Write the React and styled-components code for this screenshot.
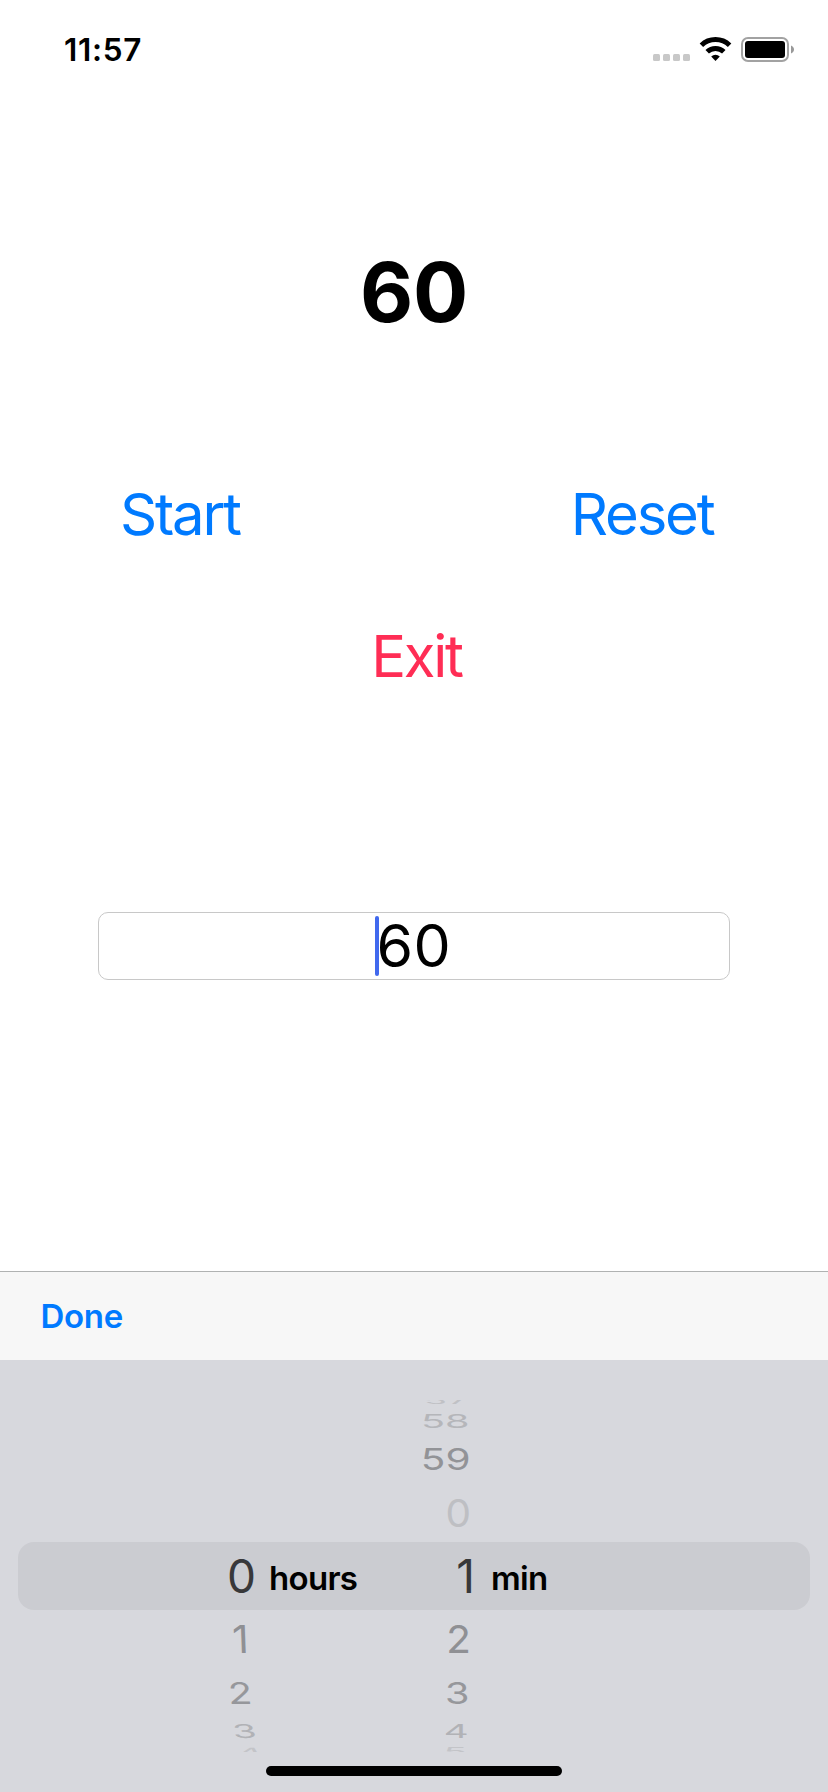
import React from "react";
import styled, { createGlobalStyle } from "styled-components";

const GlobalStyle = createGlobalStyle`
  * { box-sizing: border-box; }
  body { margin: 0; background: #fff; font-family: Inter, "Liberation Sans", sans-serif; }
  button { border: 0; padding: 0; background: none; font-family: inherit; }
`;

const Screen = styled.div`
  width: 828px;
  height: 1792px;
  display: flex;
  flex-direction: column;
  overflow: hidden;
  background: #fff;
`;

const StatusBar = styled.header`
  height: 100px;
  padding: 0 33px 0 64px;
  display: flex;
  justify-content: space-between;
  align-items: center;
`;

const Clock = styled.span`
  font-size: 31.5px;
  line-height: 40px;
  font-weight: 600;
  letter-spacing: 0.7px;
`;

const StatusIcons = styled.svg`
  display: block;
`;

const Countdown = styled.h1`
  margin: 143px 0 0;
  height: 100px;
  line-height: 100px;
  text-align: center;
  font-size: 82px;
  font-weight: 700;
  letter-spacing: -0.3px;
`;

const ButtonRow = styled.div`
  display: flex;
  justify-content: ${(p) => (p.$center ? "center" : "space-between")};
  margin-top: ${(p) => p.$top}px;
  padding: ${(p) => p.$pad};
`;

const TextButton = styled.button`
  height: 80px;
  line-height: 80px;
  font-size: 58px;
  color: ${(p) => p.$color};
  letter-spacing: ${(p) => p.$tracking}px;
`;

const Field = styled.div`
  width: 632px;
  height: 68px;
  margin: 216px 0 0 98px;
  border: 1px solid #c8c8c8;
  border-radius: 10px;
  display: flex;
  align-items: center;
  padding-left: 276px;
  font-size: 59px;
  line-height: 60px;
  letter-spacing: 0.5px;
`;

const Caret = styled.span`
  flex: none;
  width: 4px;
  height: 60px;
  border-radius: 2px;
  background: #4169ee;
`;

const FieldText = styled.span`
  margin-left: -2.5px;
`;

const Toolbar = styled.div`
  margin-top: auto;
  height: 89px;
  border-top: 1px solid #b0b2b2;
  background: #f7f7f7;
  padding-left: 40.5px;
  display: flex;
  align-items: center;
`;

const DoneButton = styled.button`
  font-size: 33px;
  line-height: 40px;
  font-weight: 600;
  color: #007aff;
  letter-spacing: -0.3px;
`;

const Keyboard = styled.div`
  height: 432px;
  padding-top: 40px;
  background: #d7d8dd;
  display: flex;
  flex-direction: column;
  align-items: center;
`;

const Wheel = styled.div`
  width: 792px;
  height: 352px;
  overflow: hidden;
  display: flex;
  flex-direction: column;
  justify-content: center;
`;

const WheelRow = styled.div`
  flex: none;
  height: ${(p) => p.$height}px;
  display: grid;
  grid-template-columns: 238px 118px 100px 150px;
  align-items: center;
  border-radius: 16px;
  background: ${(p) => (p.$selected ? "#cbccd1" : "transparent")};
  color: ${(p) => p.$color};
`;

const Digit = styled.span`
  justify-self: end;
  height: 60px;
  margin: -30px ${(p) => p.$inset}px -30px 0;
  font-size: 46px;
  line-height: 60px;
  transform-origin: 100% 50%;
  transform: scale(${(p) => p.$sx}, ${(p) => p.$sy}) skewX(${(p) => p.$skew || 0}deg);
`;

const Unit = styled.span`
  padding-left: ${(p) => p.$left}px;
  padding-top: 3px;
  font-size: 33px;
  line-height: 40px;
  font-weight: 600;
  color: #000;
  letter-spacing: -0.7px;
`;

const HomeIndicator = styled.div`
  width: 296px;
  height: 10px;
  margin-top: 14px;
  border-radius: 5px;
  background: #000;
`;

const rows = [
  { height: 16, sx: 0.84, sy: 0.23, color: "#c0c1c5", min: "57", minInset: 6, minSkew: 8 },
  { height: 26, sx: 0.86, sy: 0.41, color: "#b5b6ba", min: "58", minInset: 5 },
  { height: 50, sx: 0.88, sy: 0.65, color: "#929397", min: "59", minInset: 4 },
  { height: 58, sx: 0.88, sy: 0.83, color: "#bebfc3", min: "0", minInset: 3 },
  { height: 68, sx: 1, sy: 1, color: "#38383a", hour: "0", min: "1", hourInset: 0, minInset: -1, selected: true },
  { height: 58, sx: 0.88, sy: 0.84, color: "#8f9094", hour: "1", min: "2", hourInset: 7, minInset: 3, hourSkew: 2 },
  { height: 50, sx: 0.86, sy: 0.65, color: "#96979b", hour: "2", min: "3", hourInset: 4, minInset: 5, hourSkew: 3 },
  { height: 26, sx: 0.84, sy: 0.41, color: "#b1b2b6", hour: "3", min: "4", hourInset: 0, minInset: 5, hourSkew: 5 },
  { height: 16, sx: 0.84, sy: 0.25, color: "#c3c4c8", hour: "4", min: "5", hourInset: -7, minInset: 7, hourSkew: 10 },
];

export default function App() {
  return (
    <>
      <GlobalStyle />
      <Screen>
        <StatusBar>
          <Clock>11:57</Clock>
          <StatusIcons width="144" height="30" viewBox="651 35 144 30">
            {[653, 663, 673, 683].map((x) => (
              <rect key={x} x={x} y="54" width="7" height="7" rx="1.5" fill="#c8c8c8" />
            ))}
            <g fill="none" stroke="#000" strokeWidth="5">
              <path d="M701.4 45.2a20.3 20.3 0 0 1 28.2 0" />
              <path d="M707.2 51.8a12 12 0 0 1 16.6 0" />
            </g>
            <path d="M711.2 56.6a6.2 6.2 0 0 1 8.6 0L715.5 61z" />
            <rect x="742" y="38" width="46" height="23" rx="6" fill="none" stroke="#a2a2a2" strokeWidth="2" />
            <rect x="745" y="41" width="40" height="17" rx="3" />
            <path d="M791 45.5c4 1.5 4 6.5 0 8z" fill="#999" />
          </StatusIcons>
        </StatusBar>
        <Countdown>60</Countdown>
        <ButtonRow $top={131} $pad="0 114.5px 0 120px">
          <TextButton $color="#007aff" $tracking={-2.2}>Start</TextButton>
          <TextButton $color="#007aff" $tracking={-2.2}>Reset</TextButton>
        </ButtonRow>
        <ButtonRow $top={62} $center $pad="0 0 0 5px">
          <TextButton $color="#ff2d55" $tracking={-2.2}>Exit</TextButton>
        </ButtonRow>
        <Field>
          <Caret />
          <FieldText>60</FieldText>
        </Field>
        <Toolbar>
          <DoneButton>Done</DoneButton>
        </Toolbar>
        <Keyboard>
          <Wheel>
            {rows.map((r) => (
              <WheelRow key={r.min} $height={r.height} $color={r.color} $selected={r.selected}>
                <Digit $sx={r.sx} $sy={r.sy} $inset={r.hourInset || 0} $skew={r.hourSkew}>{r.hour}</Digit>
                {r.selected ? <Unit $left={13}>hours</Unit> : <span />}
                <Digit $sx={r.sx} $sy={r.sy} $inset={r.minInset} $skew={r.minSkew}>{r.min}</Digit>
                {r.selected ? <Unit $left={17}>min</Unit> : <span />}
              </WheelRow>
            ))}
          </Wheel>
          <HomeIndicator />
        </Keyboard>
      </Screen>
    </>
  );
}
